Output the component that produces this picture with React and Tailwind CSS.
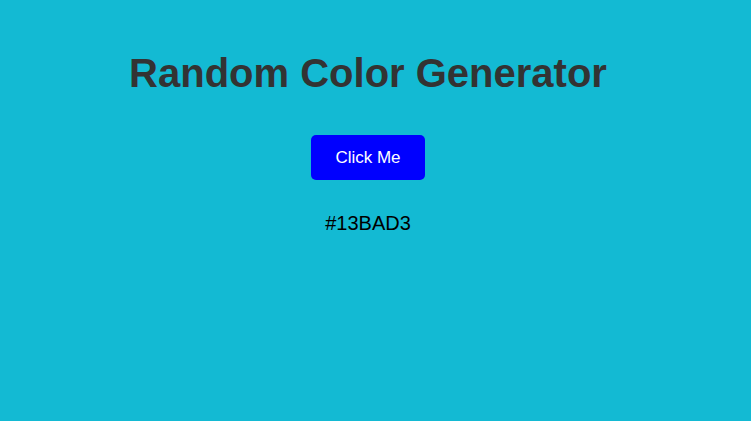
import { useState } from 'react';

const App = () => {
  const [color, setColor] = useState('#13BAD3');

  const randomColor = () => {
    const hex = Math.floor(Math.random() * 0xffffff).toString(16).padStart(6, '0');
    setColor('#' + hex.toUpperCase());
  };

  return (
    <div
      className="min-h-[421px] w-full font-['Liberation_Sans',Arial,sans-serif]"
      style={{ backgroundColor: color }}
    >
      <div className="w-[736px] flex flex-col items-center pt-[50px]">
        <h1 className="text-[40px] leading-[46px] font-bold text-[#333333]">Random Color Generator</h1>
        <button
          onClick={randomColor}
          className="mt-[39px] h-[45px] w-[114px] rounded-[5px] bg-[#0000ff] text-white text-[17px]"
        >
          Click Me
        </button>
        <p className="mt-[32px] text-[20px] leading-[23px] text-black">{color}</p>
      </div>
    </div>
  );
};

export default App;
